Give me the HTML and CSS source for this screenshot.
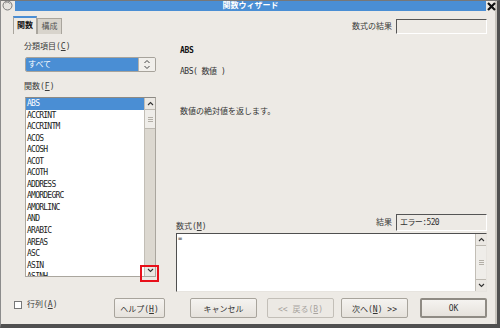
FILE: index.html
```html
<!DOCTYPE html>
<html lang="ja">
<head>
  <meta charset="UTF-8" />
  <title>関数ウィザード</title>
  <link rel="stylesheet" href="styles.css">
</head>
<body>

<div class="window">
  <div class="titlebar">
    <span class="win-icon">
      <svg width="11" height="11" viewBox="0 0 11 11">
        <circle cx="5.5" cy="5.5" r="4.5" fill="#e6e4e0" stroke="#7a7a7a" stroke-width="1"/>
        <path d="M3 3.2 A3.2 3.2 0 0 1 8.2 4" fill="none" stroke="#8a8a8a" stroke-width="0.9"/>
      </svg>
    </span>
    <div class="title">関数ウィザード</div>
    <span class="close">
      <svg width="9" height="9" viewBox="0 0 9 9">
        <path d="M1 1 L8 8 M8 1 L1 8" stroke="#111" stroke-width="2.2"/>
      </svg>
    </span>
  </div>

  <div class="content">
    <!-- 左側: タブと関数一覧 -->
    <div class="left">
      <div class="tabs">
        <span class="tab active">関数</span>
        <span class="tab">構成</span>
      </div>
      <div class="pane">
        <div class="label">分類項目(<u>C</u>)</div>
        <div class="select">
          <span class="select-value">すべて</span>
          <span class="spin">
            <svg width="8" height="11" viewBox="0 0 8 11">
              <path d="M1.5 4 L4 1.5 L6.5 4 M1.5 7 L4 9.5 L6.5 7" fill="none" stroke="#444" stroke-width="1"/>
            </svg>
          </span>
        </div>
        <div class="label">関数(<u>F</u>)</div>
        <div class="listbox">
          <ul class="items">
            <li class="selected">ABS</li>
            <li>ACCRINT</li>
            <li>ACCRINTM</li>
            <li>ACOS</li>
            <li>ACOSH</li>
            <li>ACOT</li>
            <li>ACOTH</li>
            <li>ADDRESS</li>
            <li>AMORDEGRC</li>
            <li>AMORLINC</li>
            <li>AND</li>
            <li>ARABIC</li>
            <li>AREAS</li>
            <li>ASC</li>
            <li>ASIN</li>
            <li>ASINH</li>
          </ul>
          <div class="scrollbar">
            <span class="arrow">
              <svg width="7" height="5" viewBox="0 0 7 5"><path d="M1 4 L3.5 1.5 L6 4" fill="none" stroke="#333" stroke-width="1.1"/></svg>
            </span>
            <span class="thumb tall"><i></i><i></i><i></i></span>
            <span class="track"></span>
            <span class="arrow">
              <svg width="7" height="5" viewBox="0 0 7 5"><path d="M1 1 L3.5 3.5 L6 1" fill="none" stroke="#333" stroke-width="1.1"/></svg>
            </span>
          </div>
          <div class="marker"></div>
        </div>
      </div>
    </div>

    <!-- 右側: 関数の説明と数式 -->
    <div class="right">
      <div class="result-row">
        <span class="label">数式の結果</span>
        <span class="inset wide"></span>
      </div>
      <div class="fname">ABS</div>
      <div class="syntax">ABS( 数値 )</div>
      <div class="desc">数値の絶対値を返します。</div>

      <div class="formula-head">
        <span class="label">数式(<u>M</u>)</span>
        <span class="result">
          <span class="label">結果</span>
          <span class="inset wide">エラー:520</span>
        </span>
      </div>
      <div class="textarea">
        <div class="text">=</div>
        <div class="scrollbar">
          <span class="arrow">
            <svg width="7" height="5" viewBox="0 0 7 5"><path d="M1 4 L3.5 1.5 L6 4" fill="none" stroke="#333" stroke-width="1.1"/></svg>
          </span>
          <span class="thumb fill"><i></i><i></i><i></i></span>
          <span class="arrow">
            <svg width="7" height="5" viewBox="0 0 7 5"><path d="M1 1 L3.5 3.5 L6 1" fill="none" stroke="#333" stroke-width="1.1"/></svg>
          </span>
        </div>
      </div>
    </div>
  </div>

  <div class="footer">
    <span class="checkbox"></span>
    <span class="label check-label">行列(<u>A</u>)</span>
    <div class="buttons">
      <button class="btn help">ヘルプ(<u>H</u>)</button>
      <button class="btn cancel">キャンセル</button>
      <button class="btn back" disabled>&lt;&lt; 戻る(<u>B</u>)</button>
      <button class="btn next">次へ(<u>N</u>) &gt;&gt;</button>
      <button class="btn ok">OK</button>
    </div>
  </div>
</div>

</body>
</html>
```

FILE: styles.css
```css
/* 基本 */
body {
  margin: 0;
  font-family: 'DejaVu Sans Mono', 'Noto Sans CJK JP', monospace;
  font-size: 8px;
  color: #333;
  background: #edeae5;
}

.window {
  width: 500px;
  height: 328px;
  box-sizing: border-box;
  background: #edeae5;
  border-top: 1px solid #777;
  border-left: 1px solid #8c8c8c;
  border-right: 3px solid #505050;
  border-bottom: 4px solid #505050;
  box-shadow: inset -2px 0 0 #c9c5be;
  overflow: hidden;
}

u {
  text-decoration: underline;
  text-underline-offset: 1px;
}

/* タイトルバー */
.titlebar {
  display: flex;
  height: 10px;
}

.win-icon {
  width: 13px;
  padding-left: 1px;
  margin-top: -1px;
}

.title {
  flex: 1;
  background: #4a8ed4;
  color: #fff;
  font-weight: bold;
  text-align: center;
  line-height: 10px;
  font-size: 8px;
}

.close {
  width: 11px;
  display: flex;
  justify-content: center;
  align-items: center;
}

/* 本体 */
.content {
  display: flex;
  padding-left: 12px;
  height: 281px;
}

.left {
  width: 163px;
}

.tabs {
  display: flex;
  align-items: flex-end;
  margin-top: 5px;
  height: 18px;
}

.tab {
  box-sizing: border-box;
  height: 16px;
  width: 25px;
  line-height: 15px;
  text-align: center;
  background: #d8d4cc;
  border: 1px solid #a9a59d;
  border-bottom: none;
  color: #555;
}

.tab.active {
  height: 18px;
  width: 24px;
  line-height: 16px;
  background: #edeae5;
  border-top: 2px solid #4a8ed4;
  color: #111;
  font-weight: bold;
}

.pane {
  padding-left: 11px;
}

.label {
  line-height: 10px;
  color: #3a3a3a;
}

.pane .label {
  margin-top: 8px;
}

.pane .label + .listbox {
  margin-top: 5px;
}

.select {
  display: flex;
  box-sizing: border-box;
  width: 131px;
  height: 15px;
  margin: 5px 0 0 1px;
  border: 1px solid #a7a39b;
  border-radius: 2px;
  overflow: hidden;
}

.select + .label {
  margin-top: 10px !important;
}

.select-value {
  flex: 1;
  background: #4a8ed4;
  color: #fff;
  padding-left: 2px;
  line-height: 13px;
}

.spin {
  width: 16px;
  border-left: 1px solid #b5b1a9;
  background: #f1efeb;
  display: flex;
  justify-content: center;
  align-items: center;
}

/* 関数リスト */
.listbox {
  position: relative;
  display: flex;
  box-sizing: border-box;
  width: 131px;
  height: 180px;
  margin-left: 1px;
  background: #fff;
  border: 1px solid #aaa69e;
  border-top-color: #8d8a84;
}

.items {
  flex: 1;
  list-style: none;
  margin: 0;
  padding: 0;
  overflow: hidden;
}

.items li {
  height: 11.55px;
  line-height: 11px;
  padding-left: 1px;
  font-size: 8px;
  letter-spacing: -0.75px;
  color: #222;
}

.items li.selected {
  background: #4a8ed4;
  color: #fff;
}

.scrollbar {
  width: 10px;
  display: flex;
  flex-direction: column;
  background: #dcd8d0;
  border-left: 1px solid #c2beb6;
}

.arrow {
  height: 11px;
  display: flex;
  justify-content: center;
  align-items: center;
  background: #ebe8e3;
}

.thumb {
  display: flex;
  flex-direction: column;
  justify-content: center;
  align-items: center;
  gap: 1px;
  background: #efede9;
  border-top: 1px solid #bdb9b1;
  border-bottom: 1px solid #bdb9b1;
}

.thumb i {
  width: 5px;
  height: 1px;
  background: #b3afa7;
}

.thumb.tall {
  height: 18px;
}

.thumb.fill {
  flex: 1;
}

.track {
  flex: 1;
}

/* 注目枠 */
.marker {
  position: absolute;
  left: 114px;
  top: 167px;
  width: 19px;
  height: 17px;
  box-sizing: border-box;
  border: 2px solid #e8101a;
}

/* 右側 */
.right {
  flex: 1;
  padding-right: 10px;
}

.result-row {
  display: flex;
  justify-content: flex-end;
  align-items: center;
  gap: 4px;
  margin-top: 8px;
  height: 15px;
}

.inset {
  box-sizing: border-box;
  height: 15px;
  border: 1px solid #fff;
  border-top-color: #555;
  border-left-color: #555;
  padding-left: 3px;
  line-height: 13px;
  font-size: 8px;
  letter-spacing: -0.6px;
  color: #333;
}

.inset.wide {
  width: 91px;
}

.fname {
  margin: 12px 0 0 4px;
  line-height: 10px;
  font-weight: bold;
  color: #111;
  letter-spacing: -0.3px;
}

.syntax {
  margin: 11px 0 0 4px;
  line-height: 10px;
  font-size: 8px;
  letter-spacing: -0.5px;
}

.desc {
  margin: 30px 0 0 4px;
  line-height: 10px;
}

.formula-head {
  display: flex;
  justify-content: space-between;
  align-items: flex-end;
  margin-top: 97px;
  height: 17px;
}

.formula-head .label {
  line-height: 8px;
}

.result {
  display: flex;
  align-items: center;
  gap: 4px;
  height: 17px;
}

.result .inset {
  height: 17px;
  line-height: 15px;
}

.textarea {
  display: flex;
  box-sizing: border-box;
  height: 59px;
  margin-top: 2px;
  background: #fff;
  border: 1px solid #e7e4df;
  border-top-color: #4f4f4f;
  border-left-color: #4f4f4f;
}

.textarea .text {
  flex: 1;
  padding: 1px 0 0 1px;
  line-height: 8px;
  font-size: 7px;
}

/* 下部 */
.footer {
  display: flex;
  align-items: flex-start;
  margin-top: 6px;
  padding-left: 13px;
  height: 20px;
}

.checkbox {
  width: 8px;
  height: 8px;
  margin-top: 3px;
  box-sizing: border-box;
  border: 1px solid #777;
  background: #fff;
}

.check-label {
  margin: 2px 0 0 5px;
}

.buttons {
  display: flex;
  margin-left: auto;
  padding-right: 10px;
}

.btn {
  box-sizing: border-box;
  width: 67px;
  height: 20px;
  padding: 0;
  font-family: inherit;
  font-size: 8px;
  color: #333;
  background: linear-gradient(#f5f3f0, #e6e2dc);
  border: 1px solid #a8a49c;
  border-radius: 2px;
}

.btn.help {
  width: 51px;
  margin-right: 25px;
}

.btn.cancel {
  margin-right: 10px;
}

.btn.back {
  margin-right: 7px;
  color: #a8a49f;
  background: #ece9e4;
  border-color: #c3bfb8;
}

.btn.next {
  margin-right: 12px;
}

.btn.ok {
  border: 2px solid #8f8b84;
}
```
